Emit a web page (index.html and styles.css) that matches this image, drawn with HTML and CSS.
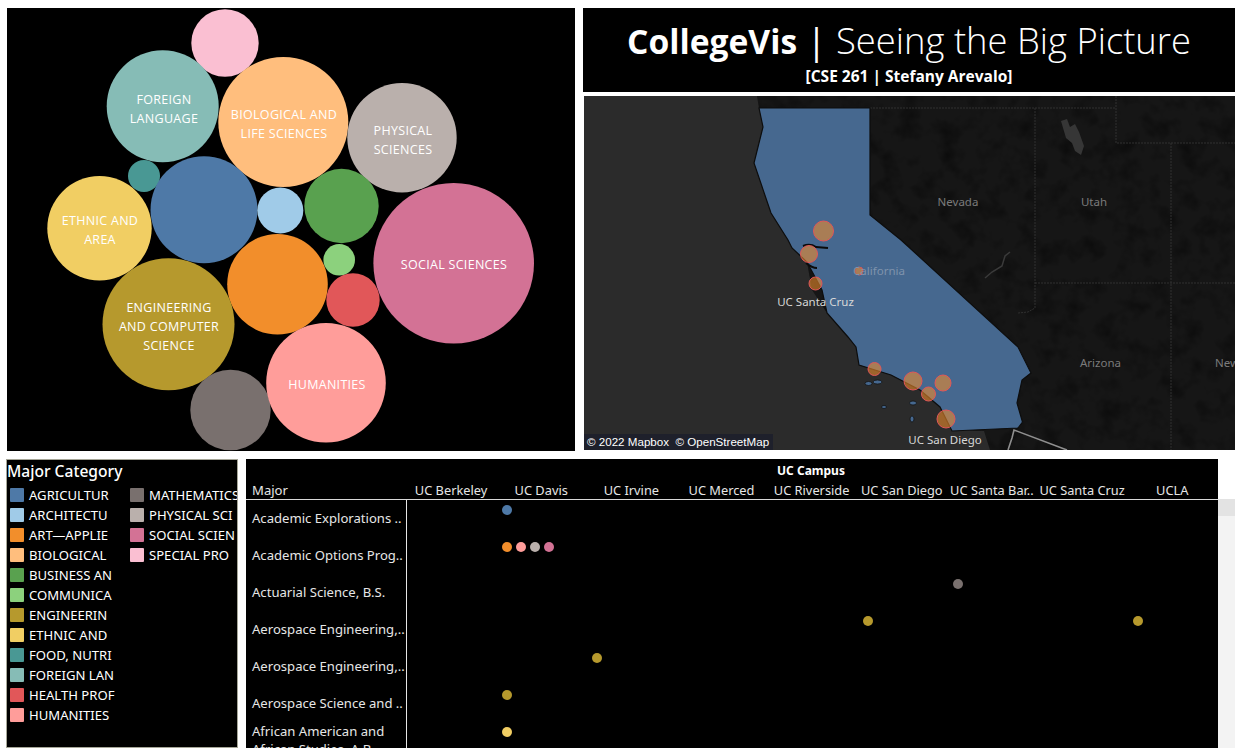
FILE: index.html
```html
<!DOCTYPE html>
<html lang="en">
<head>
<meta charset="utf-8">
<title>CollegeVis</title>
<link rel="stylesheet" href="styles.css">
</head>
<body>
<main class="dash">
  <section class="top">
    <div class="bubbles">
      <svg class="fill-svg" viewBox="7 8 568 443" width="568" height="443">
        <circle class="cat-spec" cx="225" cy="43" r="33.7"/>
        <circle class="cat-for" cx="162.7" cy="106.3" r="56"/>
        <circle class="cat-bio" cx="283.3" cy="122" r="65"/>
        <circle class="cat-phy" cx="402" cy="137.8" r="54.7"/>
        <circle class="cat-food" cx="144" cy="176" r="16"/>
        <circle class="cat-agr" cx="204" cy="209.7" r="53.5"/>
        <circle class="cat-arc" cx="280.3" cy="210.5" r="23"/>
        <circle class="cat-bus" cx="341.5" cy="206" r="37.2"/>
        <circle class="cat-eth" cx="99.5" cy="228.3" r="52.2"/>
        <circle class="cat-soc" cx="453.7" cy="263.3" r="80.3"/>
        <circle class="cat-art" cx="277.5" cy="284.3" r="50.3"/>
        <circle class="cat-com" cx="339.2" cy="259.8" r="15.8"/>
        <circle class="cat-hea" cx="353" cy="300" r="26.7"/>
        <circle class="cat-eng" cx="168.5" cy="324.3" r="66"/>
        <circle class="cat-mat" cx="230.5" cy="410" r="40.2"/>
        <circle class="cat-hum" cx="326" cy="382.8" r="59.8"/>
        <g class="bubble-text">
          <text x="164" y="104">FOREIGN</text>
          <text x="164" y="123">LANGUAGE</text>
          <text x="284" y="119">BIOLOGICAL AND</text>
          <text x="284" y="138">LIFE SCIENCES</text>
          <text x="403" y="135">PHYSICAL</text>
          <text x="403" y="154">SCIENCES</text>
          <text x="100" y="225">ETHNIC AND</text>
          <text x="100" y="244">AREA</text>
          <text x="454" y="269">SOCIAL SCIENCES</text>
          <text x="169" y="312">ENGINEERING</text>
          <text x="169" y="331">AND COMPUTER</text>
          <text x="169" y="350">SCIENCE</text>
          <text x="327" y="389">HUMANITIES</text>
        </g>
      </svg>
    </div>
    <div class="right">
      <header class="title">
        <h1 class="title-main"><b>CollegeVis</b> <span class="title-bar">|</span> Seeing the Big Picture</h1>
        <p class="title-sub">[CSE 261 | Stefany Arevalo]</p>
      </header>
      <div class="map">
        <svg class="fill-svg" viewBox="584 96 651 354" width="651" height="354">
          <defs>
            <filter id="mottle" x="0" y="0" width="100%" height="100%">
              <feTurbulence type="fractalNoise" baseFrequency="0.05" numOctaves="3" seed="7"/>
              <feColorMatrix type="matrix" values="0 0 0 0 0  0 0 0 0 0  0 0 0 0 0  1 0 0 0 -0.45"/>
            </filter>
            <clipPath id="landclip">
              <path d="M757 96 L759 108 L763 127 L754 163 L771 213 L788 240 L792 248 L807 262 L812 290 L827 313 L848 337 L856 347 L859 365 L891 375 L920 390 L940 407 L952 430 L984 431 L990 450 L1235 450 L1235 96 Z"/>
            </clipPath>
          </defs>
          <rect class="sea" x="584" y="96" width="651" height="354"/>
          <g clip-path="url(#landclip)">
            <rect class="land" x="584" y="96" width="651" height="354"/>
            <rect x="584" y="96" width="651" height="354" filter="url(#mottle)"/>
          </g>
          <g class="border-lines">
            <path d="M870 108 H1116"/>
            <path d="M1116 96 V143 H1235"/>
            <path d="M1171 143 V450"/>
            <path d="M1035 108 V308 L1028 312 L1018 313"/>
            <path d="M1035 283 H1235"/>
          </g>
          <path class="lake" d="M1061 121 L1067 119 L1070 127 L1075 124 L1079 132 L1084 146 L1081 155 L1075 151 L1072 143 L1066 138 Z"/>
          <path class="river" d="M985 278 L992 272 L1002 266 L1005 256 L1010 252"/>
          <path class="mexico" d="M1067 450 L1014 430 L1012 438 L1008 450"/>
          <path class="state" d="M759 108 H870 V215 L901 240 L1018 347 L1031 373 L1022 380 L1017 403 L1022.500 422 L1018 428 L952 431 L940 407 L920 390 L891 375 L859 365 L856 347 L848 337 L827 313 L822 290 L807 262 L792 248 L788 240 L771 213 L754 163 L763 127 Z"/>
          <g class="islands">
            <ellipse cx="868.500" cy="383.500" rx="3.500" ry="2"/>
            <ellipse cx="877.500" cy="382" rx="4.500" ry="2"/>
            <ellipse cx="913" cy="403" rx="3.500" ry="2"/>
            <ellipse cx="912" cy="419" rx="2" ry="3"/>
            <ellipse cx="884" cy="407" rx="2.500" ry="1.500"/>
          </g>
          <path class="bay" d="M803 246 Q810 243 816 247 L828 248 M806 263 Q812 268 817 268"/>
          <g class="campus">
            <circle cx="823.500" cy="231" r="10"/>
            <circle cx="809" cy="254" r="8.500"/>
            <circle cx="815.500" cy="283.500" r="6.500"/>
            <circle cx="859" cy="271" r="4"/>
            <circle cx="874.500" cy="369" r="6.500"/>
            <circle cx="913" cy="381" r="9"/>
            <circle cx="943" cy="383" r="8"/>
            <circle cx="928.500" cy="394" r="7"/>
            <circle cx="946" cy="419" r="9"/>
          </g>
          <g class="map-label">
            <text x="958" y="206">Nevada</text>
            <text x="1094" y="206">Utah</text>
            <text x="1100.500" y="367">Arizona</text>
            <text x="1227" y="367">New</text>
            <text class="map-label-faint" x="879" y="275">California</text>
          </g>
          <g class="map-campus-label">
            <text x="815.500" y="306">UC Santa Cruz</text>
            <text x="945" y="444">UC San Diego</text>
          </g>
          <rect class="attr-bg" x="584" y="434" width="189" height="16"/>
          <text class="attr" x="587" y="446">© 2022 Mapbox  © OpenStreetMap</text>
        </svg>
      </div>
    </div>
  </section>

  <section class="bottom">
    <aside class="legend">
      <h2 class="legend-title">Major Category</h2>
      <ul class="legend-list">
        <li class="legend-item"><i class="swatch cat-agr"></i>AGRICULTUR</li>
        <li class="legend-item"><i class="swatch cat-arc"></i>ARCHITECTU</li>
        <li class="legend-item"><i class="swatch cat-art"></i>ART—APPLIE</li>
        <li class="legend-item"><i class="swatch cat-bio"></i>BIOLOGICAL</li>
        <li class="legend-item"><i class="swatch cat-bus"></i>BUSINESS AN</li>
        <li class="legend-item"><i class="swatch cat-com"></i>COMMUNICA</li>
        <li class="legend-item"><i class="swatch cat-eng"></i>ENGINEERIN</li>
        <li class="legend-item"><i class="swatch cat-eth"></i>ETHNIC AND</li>
        <li class="legend-item"><i class="swatch cat-food"></i>FOOD, NUTRI</li>
        <li class="legend-item"><i class="swatch cat-for"></i>FOREIGN LAN</li>
        <li class="legend-item"><i class="swatch cat-hea"></i>HEALTH PROF</li>
        <li class="legend-item"><i class="swatch cat-hum"></i>HUMANITIES</li>
        <li class="legend-item"><i class="swatch cat-mat"></i>MATHEMATICS</li>
        <li class="legend-item"><i class="swatch cat-phy"></i>PHYSICAL SCI</li>
        <li class="legend-item"><i class="swatch cat-soc"></i>SOCIAL SCIEN</li>
        <li class="legend-item"><i class="swatch cat-spec"></i>SPECIAL PRO</li>
      </ul>
    </aside>

    <div class="table-wrap">
      <div class="table">
        <div class="campus-head">UC Campus</div>
        <div class="row head-row">
          <div class="row-label">Major</div>
          <div class="col-head">UC Berkeley</div>
          <div class="col-head">UC Davis</div>
          <div class="col-head">UC Irvine</div>
          <div class="col-head">UC Merced</div>
          <div class="col-head">UC Riverside</div>
          <div class="col-head">UC San Diego</div>
          <div class="col-head">UC Santa Bar..</div>
          <div class="col-head">UC Santa Cruz</div>
          <div class="col-head">UCLA</div>
        </div>
        <div class="body-rows">
          <div class="row data-row">
            <div class="row-label">Academic Explorations ..</div>
            <div class="cell col-davis"><i class="dot cat-agr"></i></div>
          </div>
          <div class="row data-row">
            <div class="row-label">Academic Options Prog..</div>
            <div class="cell col-davis"><i class="dot cat-art"></i><i class="dot cat-hum"></i><i class="dot cat-phy"></i><i class="dot cat-soc"></i></div>
          </div>
          <div class="row data-row">
            <div class="row-label">Actuarial Science, B.S.</div>
            <div class="cell col-sb"><i class="dot cat-mat"></i></div>
          </div>
          <div class="row data-row">
            <div class="row-label">Aerospace Engineering,..</div>
            <div class="cell col-sd"><i class="dot cat-eng"></i></div>
            <div class="cell col-ucla"><i class="dot cat-eng"></i></div>
          </div>
          <div class="row data-row">
            <div class="row-label">Aerospace Engineering,..</div>
            <div class="cell col-irvine"><i class="dot cat-eng"></i></div>
          </div>
          <div class="row data-row">
            <div class="row-label">Aerospace Science and ..</div>
            <div class="cell col-davis"><i class="dot cat-eng"></i></div>
          </div>
          <div class="row data-row">
            <div class="row-label">African American and African Studies, A.B.</div>
            <div class="cell col-davis"><i class="dot cat-eth"></i></div>
          </div>
        </div>
      </div>
      <div class="scrollbar"><div class="scroll-thumb"></div></div>
    </div>
  </section>
</main>
</body>
</html>
```
FILE: styles.css
```css
* { box-sizing: border-box; }
html, body { margin: 0; height: 100%; }
body {
  background: #fff;
  color: #fff;
  font-family: "Noto Sans", "Open Sans", sans-serif;
  overflow: hidden;
}
.dash { padding: 8px 0 0 6px; }
.top { display: flex; gap: 8px; margin-left: 1px; }
.bottom { display: flex; gap: 8px; margin-top: 8px; }
.fill-svg { display: block; }

.cat-agr { background: #4e79a7; fill: #4e79a7; }
.cat-arc { background: #a0cbe8; fill: #a0cbe8; }
.cat-art { background: #f28e2b; fill: #f28e2b; }
.cat-bio { background: #ffbe7d; fill: #ffbe7d; }
.cat-bus { background: #59a14f; fill: #59a14f; }
.cat-com { background: #8cd17d; fill: #8cd17d; }
.cat-eng { background: #b6992d; fill: #b6992d; }
.cat-eth { background: #f1ce63; fill: #f1ce63; }
.cat-food { background: #499894; fill: #499894; }
.cat-for { background: #86bcb6; fill: #86bcb6; }
.cat-hea { background: #e15759; fill: #e15759; }
.cat-hum { background: #ff9d9a; fill: #ff9d9a; }
.cat-mat { background: #79706e; fill: #79706e; }
.cat-phy { background: #bab0ac; fill: #bab0ac; }
.cat-soc { background: #d37295; fill: #d37295; }
.cat-spec { background: #fabfd2; fill: #fabfd2; }

.bubbles { width: 568px; height: 443px; background: #000; }
.bubble-text text {
  fill: #fff;
  font-family: "Open Sans", sans-serif;
  font-size: 12.5px;
  letter-spacing: 0.3px;
  text-anchor: middle;
}

.right { width: 652px; display: flex; flex-direction: column; }
.title { height: 84px; background: #000; text-align: center; }
.title-main {
  margin: 0;
  padding-top: 10px;
  font-family: "Open Sans", sans-serif;
  font-size: 36.4px;
  line-height: 44px;
  font-weight: 300;
  white-space: nowrap;
}
.title-main b { font-weight: 700; font-size: 33.6px; }
.title-bar { font-weight: 400; }
.title-sub {
  margin: 3px 0 0;
  font-family: "Open Sans", sans-serif;
  font-size: 15.5px;
  line-height: 20px;
  font-weight: 700;
}
.map { height: 354px; width: 651px; margin: 4px 0 0 1px; overflow: hidden; background: #2b2b2b; }
.sea { fill: #2b2b2b; }
.land { fill: #161616; }
.border-lines path { fill: none; stroke: #303030; stroke-width: 1; stroke-dasharray: 2 1; }
.lake { fill: #363636; }
.river { fill: none; stroke: #3a3a3a; stroke-width: 1.5; }
.mexico { fill: none; stroke: #8f8f8f; stroke-width: 1.6; }
.state { fill: #46688f; stroke: #0d0d0d; stroke-width: 1.2; }
.islands ellipse { fill: #46688f; stroke: #111; stroke-width: 0.8; }
.bay { fill: none; stroke: #0b0b0b; stroke-width: 2; }
.campus circle { fill: rgba(242, 142, 43, 0.58); stroke: #e15759; stroke-width: 1; }
.map-label text {
  fill: #7b7b7b;
  font-size: 11.5px;
  font-family: "Noto Sans", sans-serif;
  text-anchor: middle;
}
.map-label .map-label-faint { fill: #7f93ac; }
.map-campus-label text {
  fill: #d8d8d8;
  font-size: 11.5px;
  font-family: "Noto Sans", sans-serif;
  text-anchor: middle;
}
.attr-bg { fill: rgba(20, 24, 44, 0.55); }
.attr {
  fill: #fff;
  font-family: "Liberation Sans", sans-serif;
  font-size: 11.6px;
  white-space: pre;
}

.legend {
  width: 232px;
  height: 289px;
  background: #000;
  border: 1px solid #a6a698;
  overflow: hidden;
}
.legend-title {
  margin: 0;
  padding: 1px 0 0 0;
  font-size: 15.6px;
  line-height: 20px;
  font-weight: 500;
}
.legend-list {
  list-style: none;
  margin: 4px 0 0 3px;
  padding: 0;
  display: grid;
  grid-template-rows: repeat(12, 20px);
  grid-template-columns: 120px 120px;
  grid-auto-flow: column;
}
.legend-item {
  display: flex;
  align-items: center;
  gap: 5px;
  font-size: 13.1px;
  white-space: nowrap;
}
.swatch { width: 14px; height: 14px; border-radius: 1px; flex: none; }

.table-wrap { display: flex; height: 289px; }
.table { width: 972px; background: #000; overflow: hidden; }
.campus-head {
  height: 21px;
  padding: 4px 0 0 0;
  margin-left: 161px;
  width: 808px;
  text-align: center;
  font-size: 12px;
  line-height: 15px;
  font-weight: 700;
}
.row { display: grid; grid-template-columns: 161px repeat(9, 90.15px); }
.head-row { height: 20px; border-bottom: 1px solid #d9d9d9; }
.head-row .row-label { border-right: 0; line-height: 21px; }
.col-head {
  padding-right: 2px;
  text-align: center;
  font-size: 12.8px;
  line-height: 21px;
  white-space: nowrap;
  color: #e6e6e6;
}
.row-label {
  padding: 0 0 0 6px;
  font-size: 13.1px;
  line-height: 18px;
  color: #e6e6e6;
}
.data-row { height: 37px; }
.data-row .row-label {
  display: flex;
  align-items: center;
  padding-bottom: 2px;
  border-right: 1px solid #e6e6e6;
  grid-column: 1;
  grid-row: 1;
}
.cell { display: flex; gap: 4px; padding: 5px 0 0 5px; grid-row: 1; }
.col-davis { grid-column: 3; }
.col-irvine { grid-column: 4; }
.col-sd { grid-column: 7; }
.col-sb { grid-column: 8; }
.col-ucla { grid-column: 10; }
.dot { width: 10px; height: 10px; border-radius: 50%; flex: none; }

.scrollbar { width: 17px; margin-top: 40px; background: #f3f3f3; height: 249px; }
.scroll-thumb { height: 17px; background: #e3e3e3; }
```
